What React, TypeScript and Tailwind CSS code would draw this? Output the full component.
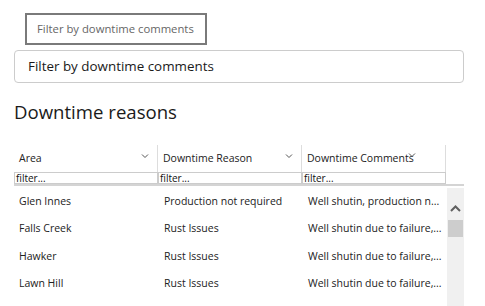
import React from "react";

const Chevron = ({ className = "" }: { className?: string }) => (
  <svg className={className} width="8" height="6" viewBox="0 0 8 6" fill="none">
    <path d="M1 1.5 L4 4.5 L7 1.5" stroke="#555" strokeWidth="1" />
  </svg>
);

const rows = [
  ["Glen Innes", "Production not required", "Well shutin, production n..."],
  ["Falls Creek", "Rust Issues", "Well shutin due to failure,..."],
  ["Hawker", "Rust Issues", "Well shutin due to failure,..."],
  ["Lawn Hill", "Rust Issues", "Well shutin due to failure,..."],
];

export default function App() {
  return (
    <div className="w-[485px] h-[306px] overflow-hidden bg-white font-['Open_Sans',sans-serif] text-[#222]">
      <div className="pt-[13px] pl-[25px]">
        <div className="w-[182px] h-[32px] border-2 border-[#7a7a7a] flex items-center pl-[10px] text-[11.3px] text-[#666]">
          Filter by downtime comments
        </div>
      </div>
      <div className="mt-[5px] ml-[14px] w-[450px] h-[33px] border border-[#ccc] rounded-[4px] pl-[13px] flex items-center text-[13.4px] text-[#1a1a1a]">
        Filter by downtime comments
      </div>
      <div className="mt-[15px] ml-[14px] text-[18.6px] leading-[28px] text-[#1a1a1a]">Downtime reasons</div>
      <div className="mt-[19px] ml-[14px] w-[450px]">
        <div className="flex h-[27px]">
          {["Area", "Downtime Reason", "Downtime Comments"].map((h, i) => (
            <div
              key={h}
              className="relative w-[144px] flex items-center pl-[5px] text-[10.5px] text-[#222] border-r border-[#ddd]"
            >
              {h}
              {i < 2 ? (
                <Chevron className="absolute right-[8px] top-[8px]" />
              ) : (
                <Chevron className="absolute left-[106px] top-[7px]" />
              )}
            </div>
          ))}
        </div>
        <div className="flex h-[14px] border-b-2 border-[#d4d4d4]">
          {[0, 1, 2].map((i) => (
            <div
              key={i}
              className="w-[144px] h-[12px] border border-[#ccc] flex items-center pl-[1px] text-[10px] text-[#111] leading-none"
            >
              filter...
            </div>
          ))}
        </div>
        <div className="flex mt-[2px]">
          <div className="w-[432px]">
            {rows.map((r, idx) => (
              <div key={idx} className="flex h-[27.5px] items-center text-[10.5px] text-[#222]">
                <div className="w-[144px] pl-[5px] whitespace-nowrap">{r[0]}</div>
                <div className="w-[144px] pl-[6px] whitespace-nowrap">{r[1]}</div>
                <div className="w-[144px] pl-[6px] whitespace-nowrap">{r[2]}</div>
              </div>
            ))}
          </div>
          <div className="ml-[1px] w-[17px] h-[140px] bg-[#f0f0f0] flex flex-col items-center">
            <svg className="mt-[17px]" width="11" height="7" viewBox="0 0 11 7" fill="none">
              <path d="M1 6 L5.5 1.5 L10 6" stroke="#606060" strokeWidth="2" />
            </svg>
            <div className="mt-[8px] w-[15px] h-[17px] bg-[#cdcdcd]" />
          </div>
        </div>
      </div>
    </div>
  );
}
